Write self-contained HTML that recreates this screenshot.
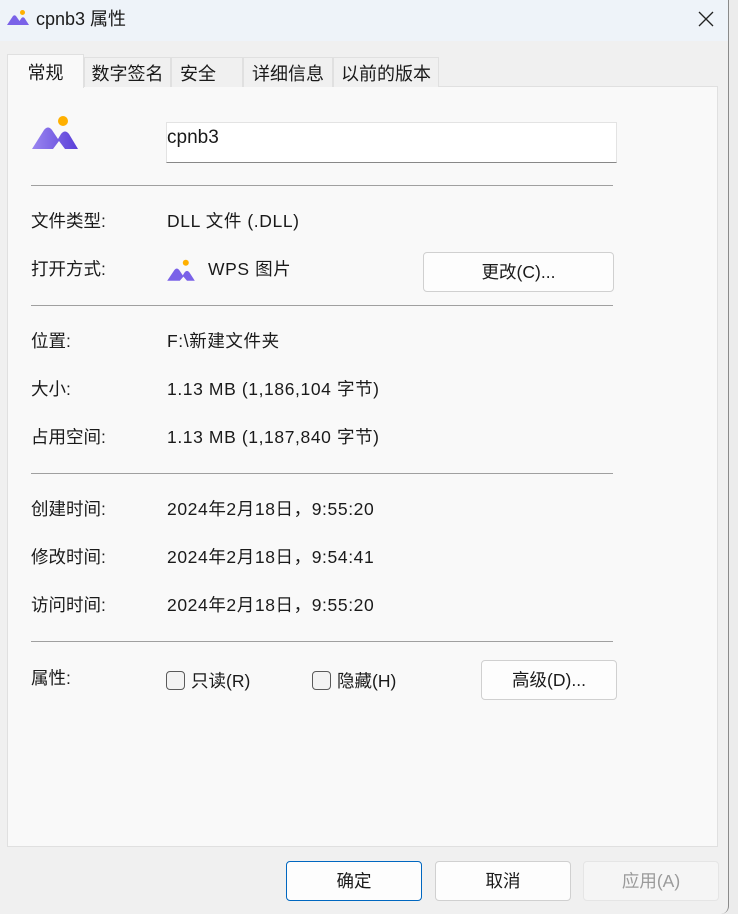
<!DOCTYPE html>
<html><head><meta charset="utf-8"><style>
*{margin:0;padding:0;box-sizing:border-box}
body{width:738px;height:914px;overflow:hidden;background:#ececec;font-family:"Liberation Sans","Noto Sans CJK SC",sans-serif;font-size:17.5px;line-height:24px;color:#1a1a1a;position:relative}
.win{position:absolute;left:0;top:0;width:729px;height:914px;background:#f0f0f0;border-right:1px solid #8a8a8a;border-bottom-right-radius:8px}
.title{position:absolute;left:0;top:0;width:728px;height:41px;background:#eef3f9}
.abs{position:absolute;white-space:nowrap}
.v{letter-spacing:0.6px}
.panel{position:absolute;left:7px;top:86px;width:711px;height:761px;background:#f9f9f9;border:1px solid #e0e0e0}
.tab{position:absolute;top:57px;height:30px;background:#f0f0f0;border:1px solid #e0e0e0;border-bottom:none;font-size:18px;line-height:32px;text-align:center}
.sep{position:absolute;left:31px;width:582px;height:1px;background:#a0a0a0}
.btn{position:absolute;background:#fdfdfd;border:1px solid #d0d0d0;border-radius:4px;text-align:center;font-size:17.5px;line-height:38px}
.cb{position:absolute;width:19px;height:19px;border:1px solid #5a5a5a;border-radius:4px;background:#f3f3f3}
</style></head><body>
<div class="win">
<div class="title"></div>
<svg class="abs" style="left:6px;top:8px" width="24" height="20" viewBox="0 0 48 40"><circle cx="33" cy="9" r="5" fill="#ffb000"/><path d="M2 34 L14 16 Q17 13 20 16 L27 26 L31 20 Q34 17 37 20 L46 34 Z" fill="#7a62e8"/></svg>
<div class="abs" style="left:36px;top:7px;font-size:18px">cpnb3 属性</div>
<svg class="abs" style="left:697px;top:10px" width="18" height="18"><path d="M2 2L16 16M16 2L2 16" stroke="#222" stroke-width="1.3"/></svg>
<div class="panel"></div>
<div class="tab" style="left:7px;top:54px;width:77px;height:34px;background:#f9f9f9;z-index:2;line-height:36px">常规</div>
<div class="tab" style="left:84px;width:87px">数字签名</div>
<div class="tab" style="left:171px;width:72px;text-align:left;padding-left:8px">安全</div>
<div class="tab" style="left:243px;width:90px">详细信息</div>
<div class="tab" style="left:333px;width:106px">以前的版本</div>
<svg class="abs" style="left:31px;top:114px" width="48" height="36" viewBox="0 0 48 36"><circle cx="32" cy="7" r="5" fill="#ffb000"/><defs><linearGradient id="g" x1="0" x2="1"><stop offset="0" stop-color="#9a86f0"/><stop offset="1" stop-color="#5a3fd8"/></linearGradient></defs><path d="M1 35 L13 16 Q17 11 21 16 L27 25 L30 20 Q34 15 38 20 L47 35 L34 35 L28 27 L22 35 Z" fill="url(#g)"/></svg>
<div class="abs" style="left:166px;top:122px;width:451px;height:41px;background:#fff;border:1px solid #e3e3e3;border-bottom:1px solid #888;padding:3px 0 0 0;font-size:19px">cpnb3</div>
<div class="sep" style="top:185px"></div>
<div class="abs" style="left:31px;top:209px">文件类型:</div><div class="abs v" style="left:167px;top:209px">DLL 文件 (.DLL)</div>
<div class="abs" style="left:31px;top:257px">打开方式:</div>
<svg class="abs" style="left:166px;top:258px" width="30" height="24" viewBox="0 0 48 40"><circle cx="32" cy="8" r="5" fill="#ffb000"/><path d="M1 38 L13 20 Q17 15 21 20 L27 29 L30 24 Q34 19 38 24 L47 38 L34 38 L28 31 L22 38 Z" fill="#7a62e8"/></svg>
<div class="abs v" style="left:208px;top:257px">WPS 图片</div>
<div class="btn" style="left:423px;top:252px;width:191px;height:40px">更改(C)...</div>
<div class="sep" style="top:305px"></div>
<div class="abs" style="left:31px;top:329px">位置:</div><div class="abs v" style="left:167px;top:329px">F:\新建文件夹</div>
<div class="abs" style="left:31px;top:377px">大小:</div><div class="abs v" style="left:167px;top:377px">1.13 MB (1,186,104 字节)</div>
<div class="abs" style="left:31px;top:425px">占用空间:</div><div class="abs v" style="left:167px;top:425px">1.13 MB (1,187,840 字节)</div>
<div class="sep" style="top:473px"></div>
<div class="abs" style="left:31px;top:497px">创建时间:</div><div class="abs v" style="left:167px;top:497px">2024年2月18日，9:55:20</div>
<div class="abs" style="left:31px;top:545px">修改时间:</div><div class="abs v" style="left:167px;top:545px">2024年2月18日，9:54:41</div>
<div class="abs" style="left:31px;top:593px">访问时间:</div><div class="abs v" style="left:167px;top:593px">2024年2月18日，9:55:20</div>
<div class="sep" style="top:641px"></div>
<div class="abs" style="left:31px;top:666px">属性:</div>
<div class="cb" style="left:166px;top:671px"></div><div class="abs" style="left:191px;top:669px">只读(R)</div>
<div class="cb" style="left:312px;top:671px"></div><div class="abs" style="left:337px;top:669px">隐藏(H)</div>
<div class="btn" style="left:481px;top:660px;width:136px;height:40px">高级(D)...</div>
<div class="btn" style="left:286px;top:861px;width:136px;height:40px;border:1px solid #0067c0">确定</div>
<div class="btn" style="left:435px;top:861px;width:136px;height:40px">取消</div>
<div class="btn" style="left:583px;top:861px;width:136px;height:40px;background:#f5f5f5;border-color:#e5e5e5;color:#9a9a9a">应用(A)</div>
</div>
</body></html>
